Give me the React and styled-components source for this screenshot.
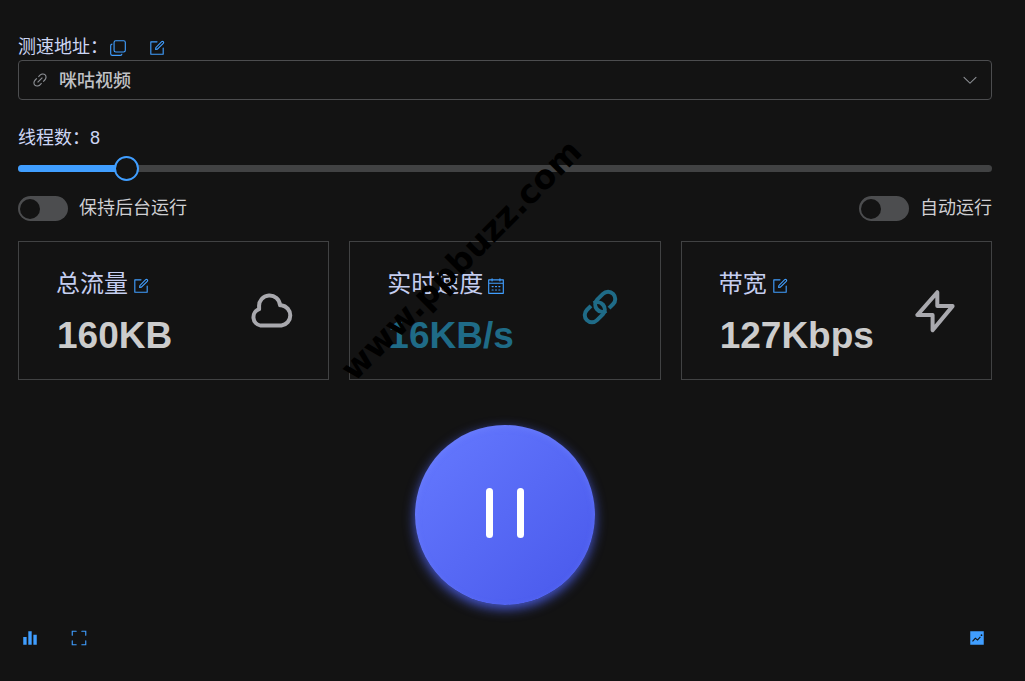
import React, { useState } from 'react';
import styled, { createGlobalStyle } from 'styled-components';

const GlobalStyle = createGlobalStyle`
  * {
    box-sizing: border-box;
  }
  body {
    margin: 0;
    background-color: #131313;
    color: #cfd3dc;
    font-family: 'Liberation Sans', 'Noto Sans CJK SC', sans-serif;
    font-size: 18px;
  }
`;

const Page = styled.main`
  position: relative;
  padding: 36px 33px 32px 18px;
`;

const LabelRow = styled.div`
  display: flex;
  align-items: center;
  gap: 19px;
  height: 24px;
`;

const FieldLabel = styled.label`
  align-self: flex-start;
  line-height: 22px;
  margin-right: -19px;
  color: #cdd6f4;
`;

const IconButton = styled.button`
  display: flex;
  align-items: center;
  justify-content: center;
  width: 20px;
  height: 20px;
  padding: 0;
  border: none;
  background: none;
  color: #409eff;
  cursor: pointer;
`;

const Glyph = styled.svg`
  display: block;
  flex: none;
  width: 18px;
  height: 18px;
  fill: currentColor;
`;

const SelectBox = styled.div`
  display: grid;
  grid-template-columns: 12px 18px 1fr 18px 12px;
  align-items: center;
  height: 40px;
  border: 1px solid #4c4d4f;
  border-radius: 4px;
  color: #8d9095;

  > svg {
    grid-row: 1;
    pointer-events: none;
  }
  > svg:first-of-type {
    grid-column: 2;
  }
  > svg:last-of-type {
    grid-column: 4;
  }
`;

const Select = styled.select`
  grid-row: 1;
  grid-column: 1 / -1;
  height: 38px;
  padding: 2px 40px 0;
  border: none;
  outline: none;
  appearance: none;
  background: transparent;
  color: #c0c2c6;
  font: inherit;
  font-weight: 500;
`;

const ThreadLabel = styled.label`
  display: block;
  margin-top: 26px;
  line-height: 24px;
  color: #cdd6f4;
`;

const Slider = styled.div`
  display: grid;
  align-items: center;
  height: 25px;
  margin-top: 6px;

  > * {
    grid-area: 1 / 1;
  }
`;

const Track = styled.div`
  height: 7px;
  border-radius: 4px;
  background-color: #414243;
  overflow: hidden;
`;

const TrackFill = styled.div`
  height: 100%;
  background-color: #409eff;
`;

// wider than the track by one thumb, so the thumb centre reaches both ends
const Range = styled.input`
  appearance: none;
  height: 25px;
  margin: 0 -12px;
  background: transparent;
  cursor: pointer;

  &::-webkit-slider-thumb {
    appearance: none;
    width: 25px;
    height: 25px;
    border: 2px solid #409eff;
    border-radius: 50%;
    background-color: #131313;
  }
`;

const SwitchRow = styled.div`
  display: flex;
  justify-content: space-between;
  margin-top: 15px;
`;

const SwitchLabel = styled.label`
  display: flex;
  align-items: center;
  gap: 11px;
  line-height: 25px;
  color: #cfcfd2;
  cursor: pointer;
`;

const Switch = styled.input`
  appearance: none;
  width: 50px;
  height: 25px;
  margin: 0;
  padding: 3px 2px;
  border-radius: 13px;
  background-color: ${(props) => (props.checked ? '#409eff' : '#4c4d4f')};
  cursor: pointer;

  &::before {
    content: '';
    display: block;
    width: 20px;
    height: 20px;
    margin-left: ${(props) => (props.checked ? '26px' : '0')};
    border-radius: 50%;
    background-color: #131313;
  }
`;

const Cards = styled.section`
  display: grid;
  grid-template-columns: repeat(3, 1fr);
  gap: 20px;
  margin-top: 20px;
`;

const Card = styled.article`
  display: flex;
  align-items: center;
  justify-content: space-between;
  padding: 24px 32px 22px 37px;
  border: 1px solid #414243;
`;

const CardTitle = styled.div`
  display: flex;
  align-items: center;
  gap: 3px;
  height: 36px;
  color: #c5cef0;
  font-size: 24px;
  line-height: 36px;

  > button {
    margin-top: 4px;
  }
`;

const CardValue = styled.div`
  margin-top: 13px;
  padding-left: 1px;
  color: ${(props) => props.$color || '#cccccc'};
  font-size: 37px;
  font-weight: bold;
  line-height: 42px;
`;

const CardIcon = styled.svg`
  flex: none;
  width: 48px;
  height: 48px;
  fill: none;
  stroke: ${(props) => props.$color || '#a9a9ae'};
  stroke-width: 4;
  stroke-linejoin: round;
`;

const PauseButton = styled.button`
  display: flex;
  align-items: center;
  justify-content: center;
  gap: 24px;
  width: 180px;
  height: 180px;
  margin: 45px auto 0;
  padding: 0;
  border: none;
  border-radius: 50%;
  background: linear-gradient(135deg, #667aff, #4858eb);
  box-shadow: 0 4px 12px rgba(84, 104, 255, 0.8), inset 0 2px 6px rgba(120, 140, 255, 0.4);
  cursor: pointer;
`;

const PauseBar = styled.span`
  width: 7px;
  height: 50px;
  margin-top: -4px;
  border-radius: 4px;
  background-color: #fff;
`;

const Footer = styled.footer`
  display: flex;
  gap: 29px;
  margin-top: 23px;
  padding: 0 5px 0 2px;

  > :last-child {
    margin-left: auto;
  }
`;

const Watermark = styled.div`
  position: absolute;
  left: 469px;
  top: 268px;
  color: #000;
  font-family: 'DejaVu Sans', sans-serif;
  font-size: 33px;
  font-weight: bold;
  line-height: 48px;
  white-space: nowrap;
  pointer-events: none;
  transform: translate(-50%, -50%) rotate(-45deg) translateY(-11px);
`;

const paths = {
  edit: [
    'M832 512a32 32 0 1 1 64 0v352a32 32 0 0 1-32 32H160a32 32 0 0 1-32-32V160a32 32 0 0 1 32-32h352a32 32 0 0 1 0 64H192v640h640V512z',
    'm469.952 554.24 52.8-7.552L847.104 222.4a32 32 0 1 0-45.248-45.248L477.44 501.44l-7.552 52.8zm422.4-422.4a96 96 0 0 1 0 135.808l-331.84 331.84a32 32 0 0 1-18.112 9.088L436.8 623.68a32 32 0 0 1-36.224-36.224l15.104-105.6a32 32 0 0 1 9.024-18.112l331.904-331.84a96 96 0 0 1 135.744 0z',
  ],
  copy: [
    'M768 832a128 128 0 0 1-128 128H192A128 128 0 0 1 64 832V384a128 128 0 0 1 128-128v64a64 64 0 0 0-64 64v448a64 64 0 0 0 64 64h448a64 64 0 0 0 64-64h64z',
    'M384 128a64 64 0 0 0-64 64v448a64 64 0 0 0 64 64h448a64 64 0 0 0 64-64V192a64 64 0 0 0-64-64H384zm0-64h448a128 128 0 0 1 128 128v448a128 128 0 0 1-128 128H384a128 128 0 0 1-128-128V192A128 128 0 0 1 384 64z',
  ],
  calendar: [
    'M128 384v512h768V192H768v32a32 32 0 1 1-64 0v-32H320v32a32 32 0 0 1-64 0v-32H128v128h768v64H128zm192-256h384V96a32 32 0 1 1 64 0v32h160a32 32 0 0 1 32 32v768a32 32 0 0 1-32 32H96a32 32 0 0 1-32-32V160a32 32 0 0 1 32-32h160V96a32 32 0 0 1 64 0v32zm-32 384h64a32 32 0 0 1 0 64h-64a32 32 0 0 1 0-64zm0 192h64a32 32 0 1 1 0 64h-64a32 32 0 1 1 0-64zm192-192h64a32 32 0 0 1 0 64h-64a32 32 0 0 1 0-64zm0 192h64a32 32 0 1 1 0 64h-64a32 32 0 1 1 0-64zm192-192h64a32 32 0 1 1 0 64h-64a32 32 0 1 1 0-64zm0 192h64a32 32 0 1 1 0 64h-64a32 32 0 1 1 0-64z',
  ],
  link: [
    'M715.648 625.152 670.4 579.904l90.496-90.56c75.008-74.944 85.12-186.368 22.656-248.896-62.528-62.464-173.952-52.352-248.96 22.656L444.16 353.6l-45.248-45.248 90.496-90.496c100.032-99.968 251.968-110.08 339.456-22.656 87.488 87.488 77.312 239.424-22.656 339.456l-90.496 90.496zm-90.496 90.496-90.496 90.496C434.624 906.112 282.688 916.224 195.2 828.8c-87.488-87.488-77.312-239.424 22.656-339.456l90.496-90.496 45.248 45.248-90.496 90.56c-75.008 74.944-85.12 186.368-22.656 248.896 62.528 62.464 173.952 52.352 248.96-22.656l90.496-90.496 45.248 45.248zm0-362.048 45.248 45.248L398.848 670.4 353.6 625.152 625.152 353.6z',
  ],
  arrowDown: [
    'M831.872 340.864 512 652.672 192.128 340.864a30.592 30.592 0 0 0-42.752 0 29.12 29.12 0 0 0 0 41.6L489.344 714.24a32 32 0 0 0 44.672 0l340.288-331.712a29.12 29.12 0 0 0 0-41.728 30.592 30.592 0 0 0-42.752 0z',
  ],
  histogram: ['M416 896V128h192v768H416zm-288 0V448h192v448H128zm576 0V320h192v576H704z'],
  fullScreen: [
    'm160 96.064 192 .192a32 32 0 0 1 0 64l-192-.192V352a32 32 0 0 1-64 0V96h64v.064zm0 831.872V928H96V672a32 32 0 1 1 64 0v191.936l192-.192a32 32 0 1 1 0 64l-192 .192zM864 96.064V96h64v256a32 32 0 1 1-64 0V160.064l-192 .192a32 32 0 1 1 0-64l192-.192zm0 831.872-192-.192a32 32 0 0 1 0-64l192 .192V672a32 32 0 1 1 64 0v256h-64v-.064z',
  ],
  trend: [
    'M128 896V128h768v768H128zm291.712-327.296 128 102.4 180.16-201.792-47.744-42.624-139.84 156.608-128-102.4-180.16 201.792 47.744 42.624 139.84-156.608zM816 352a48 48 0 1 0-96 0 48 48 0 0 0 96 0z',
  ],
};

function Icon({ name }) {
  return (
    <Glyph viewBox="0 0 1024 1024" aria-hidden="true">
      {paths[name].map((d) => (
        <path key={d} d={d} />
      ))}
    </Glyph>
  );
}

const teal = '#1f6b87';

const stats = [
  {
    title: '总流量',
    action: 'edit',
    value: '160KB',
    drawing: (
      <path d="M12.6 37.6H33.4A10.3 10.3 0 0 0 33.4 17.2H32A10.4 10.4 0 0 0 11.1 18.6V21.2A8.5 8.5 0 0 0 12.6 37.6Z" />
    ),
  },
  {
    title: '实时速度',
    action: 'calendar',
    value: '16KB/s',
    color: teal,
    drawing: (
      <g transform="translate(20 19) rotate(-45)">
        <path d="M5.6 7.2H11.4A7.2 7.2 0 0 0 11.4 -7.2H3.2A7.2 7.2 0 0 0 1.8 7" />
        <path d="M-5.6 -7.2H-11.4A7.2 7.2 0 0 0 -11.4 7.2H-3.2A7.2 7.2 0 0 0 -1.8 -7" />
      </g>
    ),
  },
  {
    title: '带宽',
    action: 'edit',
    value: '127Kbps',
    drawing: <path d="M26.3 4.2V18.1H41.6L21.6 42.2V27.1H6.3Z" />,
  },
];

const MIN_THREADS = 1;
const MAX_THREADS = 64;

function App() {
  const [threads, setThreads] = useState(8);
  const [background, setBackground] = useState(false);
  const [autoRun, setAutoRun] = useState(false);

  const percent = ((threads - MIN_THREADS) / (MAX_THREADS - MIN_THREADS)) * 100;

  return (
    <Page lang="zh-CN">
      <GlobalStyle />
      <LabelRow>
        <FieldLabel htmlFor="address">测速地址：</FieldLabel>
        <IconButton type="button" aria-label="复制">
          <Icon name="copy" />
        </IconButton>
        <IconButton type="button" aria-label="编辑">
          <Icon name="edit" />
        </IconButton>
      </LabelRow>
      <SelectBox>
        <Icon name="link" />
        <Select id="address">
          <option>咪咕视频</option>
        </Select>
        <Icon name="arrowDown" />
      </SelectBox>

      <ThreadLabel htmlFor="threads">线程数：{threads}</ThreadLabel>
      <Slider>
        <Track>
          <TrackFill style={{ width: `${percent}%` }} />
        </Track>
        <Range
          id="threads"
          type="range"
          min={MIN_THREADS}
          max={MAX_THREADS}
          value={threads}
          onChange={(e) => setThreads(Number(e.target.value))}
        />
      </Slider>

      <SwitchRow>
        <SwitchLabel>
          <Switch
            type="checkbox"
            checked={background}
            onChange={(e) => setBackground(e.target.checked)}
          />
          保持后台运行
        </SwitchLabel>
        <SwitchLabel>
          <Switch
            type="checkbox"
            checked={autoRun}
            onChange={(e) => setAutoRun(e.target.checked)}
          />
          自动运行
        </SwitchLabel>
      </SwitchRow>

      <Cards>
        {stats.map((stat) => (
          <Card key={stat.title}>
            <div>
              <CardTitle>
                {stat.title}
                <IconButton type="button" aria-label={stat.title}>
                  <Icon name={stat.action} />
                </IconButton>
              </CardTitle>
              <CardValue $color={stat.color}>{stat.value}</CardValue>
            </div>
            <CardIcon viewBox="0 0 48 48" $color={stat.color} aria-hidden="true">
              {stat.drawing}
            </CardIcon>
          </Card>
        ))}
      </Cards>

      <PauseButton type="button" aria-label="暂停">
        <PauseBar />
        <PauseBar />
      </PauseButton>

      <Footer>
        <IconButton type="button" aria-label="统计">
          <Icon name="histogram" />
        </IconButton>
        <IconButton type="button" aria-label="全屏">
          <Icon name="fullScreen" />
        </IconButton>
        <IconButton type="button" aria-label="趋势">
          <Icon name="trend" />
        </IconButton>
      </Footer>

      <Watermark>www.ppbuzz.com</Watermark>
    </Page>
  );
}

export default App;
